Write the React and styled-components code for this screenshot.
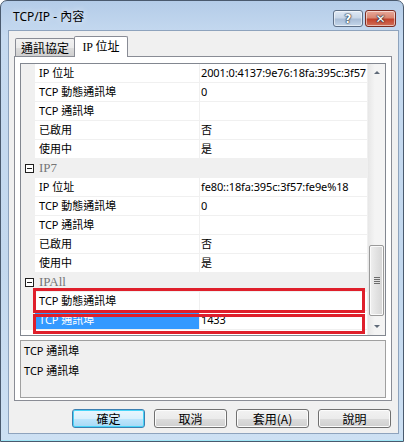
import React from 'react';
import styled, { createGlobalStyle, css } from 'styled-components';

const GlobalStyle = createGlobalStyle`
  html, body {
    margin: 0;
    padding: 0;
    background: #ffffff;
  }
  body {
    font-family: "Noto Sans", "Noto Sans CJK TC", sans-serif;
    font-size: 11px;
    color: #000;
  }
`;

const Window = styled.div`
  width: 404px;
  height: 442px;
  box-sizing: border-box;
  display: flex;
  flex-direction: column;
  padding: 0 4px 7px 7px;
  border: 1px solid #4a5a6e;
  border-radius: 7px 7px 0 0;
  background: linear-gradient(180deg, #b4cce8 0%, #c6daf0 8%, #c3d8ee 60%, #cde0f3 100%);
  box-shadow: inset 0 -1px 0 #9fe6f6;
`;

const TitleBar = styled.div`
  height: 29px;
  display: flex;
  align-items: flex-start;
  justify-content: space-between;
  padding-left: 5px;
`;

const TitleText = styled.span`
  margin-top: 8px;
  font-size: 12px;
  line-height: 16px;
  color: #000;
  text-shadow: 0 0 6px rgba(255, 255, 255, 0.9);
`;

const CaptionButtons = styled.div`
  display: flex;
  gap: 2px;
  margin-top: 9px;
  margin-right: 3px;
`;

const CaptionButton = styled.div`
  height: 17px;
  box-sizing: border-box;
  border: 1px solid #5e6f86;
  border-radius: 3px;
  display: flex;
  align-items: center;
  justify-content: center;
  font-family: "DejaVu Sans", sans-serif;
  font-weight: bold;
  color: #fff;
  text-shadow: 0 0 1px #1e2a3a, 0 0 1px #1e2a3a, 0 0 2px #1e2a3a;
  box-shadow: inset 0 0 0 1px rgba(255, 255, 255, 0.55);
  ${({ $close }) =>
    $close
      ? css`
          width: 31px;
          font-size: 12px;
          border-color: #7a2c22;
          background: linear-gradient(180deg, #e9a99a 0%, #d98772 45%, #c3432c 55%, #d0705a 100%);
        `
      : css`
          width: 30px;
          font-size: 12px;
          background: linear-gradient(180deg, #dfe9f5 0%, #c9d7e8 45%, #a9bdd6 55%, #c4d6ea 100%);
        `}
`;

const Client = styled.div`
  flex: 1;
  display: flex;
  flex-direction: column;
  padding: 5px 5px 5px;
  background: #f0f0f0;
  border: 1px solid #8ea3bd;
`;

const TabStrip = styled.div`
  height: 20px;
  display: flex;
  align-items: flex-end;
  padding-left: 1px;
`;

const Tab = styled.div`
  box-sizing: border-box;
  border: 1px solid #898c95;
  border-bottom: none;
  border-radius: 2px 2px 0 0;
  font-family: "Liberation Serif", "Noto Sans CJK TC", serif;
  font-size: 12px;
  display: flex;
  align-items: center;
  justify-content: center;
  ${({ $active }) =>
    $active
      ? css`
          position: relative;
          z-index: 1;
          margin-left: -1px;
          margin-bottom: -1px;
          width: 54px;
          height: 21px;
          background: #ffffff;
          padding-bottom: 2px;
        `
      : css`
          width: 60px;
          height: 18px;
          background: linear-gradient(180deg, #f2f2f2 0%, #ebebeb 50%, #dddddd 51%, #cfcfcf 100%);
        `}
`;

const TabPanel = styled.div`
  width: 378px;
  height: 345px;
  box-sizing: border-box;
  border: 1px solid #898c95;
  background: #ffffff;
  padding: 6px 5px 2px;
  display: flex;
  flex-direction: column;
  gap: 4px;
`;

const Grid = styled.div`
  position: relative;
  height: 273px;
  box-sizing: border-box;
  border: 1px solid #828790;
  display: flex;
  overflow: hidden;
  background: #fff;
`;

const Rows = styled.div`
  flex: 1;
  display: flex;
  flex-direction: column;
  overflow: hidden;
`;

const Row = styled.div`
  height: 19px;
  flex: none;
  box-sizing: border-box;
  display: flex;
  border-bottom: 1px solid #f0f0f0;
  ${({ $category }) =>
    $category &&
    css`
      background: #f0f0f0;
    `}
`;

const Margin = styled.div`
  width: 14px;
  flex: none;
  background: #f0f0f0;
  display: flex;
  align-items: center;
  justify-content: center;
`;

const Expander = styled.span`
  width: 9px;
  height: 9px;
  box-sizing: border-box;
  border: 1px solid #1f1f1f;
  background: #fff;
  display: flex;
  align-items: center;
  justify-content: center;
  margin-left: 3px;

  &::after {
    content: '';
    width: 5px;
    height: 1px;
    background: #1f1f1f;
  }
`;

const NameCell = styled.div`
  width: 165px;
  flex: none;
  box-sizing: border-box;
  padding-left: 4px;
  border-right: 1px solid #f0f0f0;
  line-height: 18px;
  white-space: nowrap;
  overflow: hidden;
  ${({ $selected }) =>
    $selected &&
    css`
      background: #3399ff;
      color: #fff;
    `}
`;

const ValueCell = styled.div`
  flex: 1;
  padding-left: 1px;
  line-height: 18px;
  letter-spacing: -0.12px;
  white-space: nowrap;
  overflow: hidden;
`;

const CategoryLabel = styled.div`
  padding-left: 4px;
  line-height: 18px;
  color: #767676;
  font-family: "Liberation Serif", serif;
  font-size: 13px;
`;

const Scrollbar = styled.div`
  width: 17px;
  flex: none;
  display: flex;
  flex-direction: column;
  background: linear-gradient(90deg, #e7e7e7 0%, #f4f4f4 40%, #f4f4f4 100%);
  border-left: 1px solid #f0f0f0;
`;

const ScrollArrow = styled.div`
  height: 17px;
  flex: none;
  display: flex;
  align-items: center;
  justify-content: center;

  &::after {
    content: '';
    border-left: 3px solid transparent;
    border-right: 3px solid transparent;
    ${({ $down }) =>
      $down
        ? css`
            border-top: 3px solid #5f6a78;
          `
        : css`
            border-bottom: 3px solid #5f6a78;
          `}
  }
`;

const ScrollTrack = styled.div`
  flex: 1;
  display: flex;
  flex-direction: column;
  padding: 0 1px;
`;

const Thumb = styled.div`
  margin-top: 164px;
  height: 71px;
  box-sizing: border-box;
  border: 1px solid #9a9a9a;
  border-radius: 2px;
  background: linear-gradient(90deg, #f0f0f0 0%, #e2e2e2 50%, #d6d6d6 100%);
  box-shadow: inset 0 0 0 1px #fafafa;
  display: flex;
  align-items: center;
  justify-content: center;
`;

const Gripper = styled.div`
  width: 6px;
  display: flex;
  flex-direction: column;
  gap: 1px;

  span {
    height: 1px;
    background: #6c6c6c;
  }
`;

const Highlight = styled.div`
  position: absolute;
  left: 12px;
  width: 332px;
  box-sizing: border-box;
  border: 3px solid #df1f2b;
  pointer-events: none;
  top: ${({ $top }) => $top}px;
  height: ${({ $height }) => $height}px;
`;

const Description = styled.div`
  height: 58px;
  box-sizing: border-box;
  border: 1px solid #a0a0a0;
  background: #f0f0f0;
  padding: 1px 3px;
  display: flex;
  flex-direction: column;
`;

const DescTitle = styled.div`
  line-height: 18px;
`;

const DescText = styled.div`
  margin-top: 2px;
  line-height: 18px;
`;

const ButtonRow = styled.div`
  display: flex;
  justify-content: flex-end;
  gap: 9px;
  margin-top: 8px;
  padding-right: 2px;
`;

const Button = styled.div`
  width: 73px;
  height: 19px;
  box-sizing: border-box;
  border: 1px solid #707070;
  border-radius: 3px;
  background: linear-gradient(180deg, #f2f2f2 0%, #ebebeb 50%, #dddddd 51%, #cfcfcf 100%);
  box-shadow: inset 0 0 0 1px #fcfcfc;
  font-family: "Noto Sans CJK TC", sans-serif;
  font-size: 12px;
  line-height: 16px;
  display: flex;
  align-items: center;
  justify-content: center;
  ${({ $default }) =>
    $default &&
    css`
      border-color: #3c7fb1;
      box-shadow: inset 0 0 0 1px #48d4f8;
      background: linear-gradient(180deg, #eaf6fd 0%, #d9f0fc 50%, #bee6fd 51%, #a7d9f5 100%);
    `}
`;

const properties = [
  { name: 'IP 位址', value: '2001:0:4137:9e76:18fa:395c:3f57' },
  { name: 'TCP 動態通訊埠', value: '0' },
  { name: 'TCP 通訊埠', value: '' },
  { name: '已啟用', value: '否' },
  { name: '使用中', value: '是' },
  { category: 'IP7' },
  { name: 'IP 位址', value: 'fe80::18fa:395c:3f57:fe9e%18' },
  { name: 'TCP 動態通訊埠', value: '0' },
  { name: 'TCP 通訊埠', value: '' },
  { name: '已啟用', value: '否' },
  { name: '使用中', value: '是' },
  { category: 'IPAll' },
  { name: 'TCP 動態通訊埠', value: '' },
  { name: 'TCP 通訊埠', value: '1433', selected: true },
];

const PropertyRow = ({ item }) => {
  if (item.category) {
    return (
      <Row $category>
        <Margin>
          <Expander />
        </Margin>
        <CategoryLabel>{item.category}</CategoryLabel>
      </Row>
    );
  }
  return (
    <Row>
      <Margin />
      <NameCell $selected={item.selected}>{item.name}</NameCell>
      <ValueCell>{item.value}</ValueCell>
    </Row>
  );
};

const App = () => (
  <>
    <GlobalStyle />
    <Window>
      <TitleBar>
        <TitleText>TCP/IP - 內容</TitleText>
        <CaptionButtons>
          <CaptionButton>?</CaptionButton>
          <CaptionButton $close>✕</CaptionButton>
        </CaptionButtons>
      </TitleBar>

      <Client>
        <TabStrip>
          <Tab>通訊協定</Tab>
          <Tab $active>IP 位址</Tab>
        </TabStrip>

        <TabPanel>
          <Grid>
            <Rows>
              {properties.map((item, i) => (
                <PropertyRow key={i} item={item} />
              ))}
            </Rows>
            <Scrollbar>
              <ScrollArrow />
              <ScrollTrack>
                <Thumb>
                  <Gripper>
                    <span />
                    <span />
                    <span />
                    <span />
                  </Gripper>
                </Thumb>
              </ScrollTrack>
              <ScrollArrow $down />
            </Scrollbar>
            <Highlight $top={224} $height={25} />
            <Highlight $top={250} $height={20} />
          </Grid>

          <Description>
            <DescTitle>TCP 通訊埠</DescTitle>
            <DescText>TCP 通訊埠</DescText>
          </Description>
        </TabPanel>

        <ButtonRow>
          <Button $default>確定</Button>
          <Button>取消</Button>
          <Button>套用(A)</Button>
          <Button>說明</Button>
        </ButtonRow>
      </Client>
    </Window>
  </>
);

export default App;
